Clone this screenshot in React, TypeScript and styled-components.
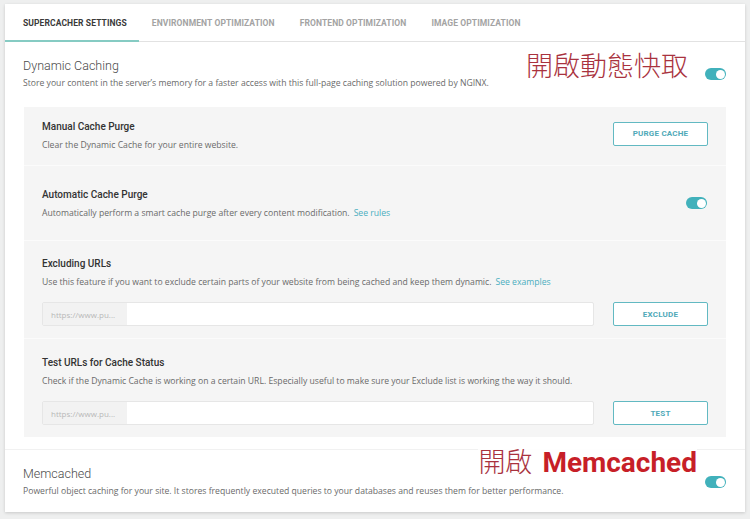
import React from "react";
import styled, { createGlobalStyle } from "styled-components";

const teal = "#41b1bb";

const GlobalStyle = createGlobalStyle`
  html, body {
    margin: 0;
    background: #eeefef;
  }
  * {
    box-sizing: border-box;
  }
`;

const Page = styled.div`
  padding: 4px 5px 7px;
`;

const Card = styled.div`
  background: #fff;
  box-shadow: 0 1px 3px rgba(0, 0, 0, 0.16);
`;

const Tabs = styled.nav`
  display: flex;
  height: 38px;
  border-bottom: 1px solid #e2e2e2;
`;

const Tab = styled.div<{ $active?: boolean }>`
  display: flex;
  align-items: center;
  padding: 2px 12.5px 0;
  font-family: Roboto, "Liberation Sans", sans-serif;
  font-size: 8.5px;
  font-weight: 700;
  letter-spacing: 0.1px;
  text-transform: uppercase;
  color: ${(p) => (p.$active ? "#3a3a3a" : "#a3a3a3")};
  border-bottom: 2px solid ${(p) => (p.$active ? "#86cbc3" : "transparent")};
  margin-bottom: -1px;

  &:first-child {
    padding-left: 18px;
  }
`;

const Section = styled.section<{ $divider?: boolean }>`
  position: relative;
  display: flex;
  align-items: center;
  justify-content: space-between;
  padding: 16px 19px 17px 18px;
  ${(p) =>
    p.$divider &&
    `
    margin-top: 12px;
    border-top: 1px solid #f1f1f1;
    padding-bottom: 14px;
  `}
`;

const SectionTitle = styled.h2`
  margin: 0;
  font-family: Roboto, "Liberation Sans", sans-serif;
  font-size: 12.5px;
  font-weight: 300;
  line-height: 16px;
  color: #4a4a4a;
`;

const Desc = styled.p`
  margin: 2px 0 0;
  font-family: "Open Sans", "Liberation Sans", sans-serif;
  font-size: 8.65px;
  line-height: 14px;
  color: #6a6a6a;
`;

const Link = styled.a`
  margin-left: 4px;
  color: #4aaebf;
  text-decoration: none;
`;

const Toggle = styled.span`
  position: relative;
  display: inline-block;
  flex: none;
  width: 21px;
  height: 12px;
  border-radius: 6px;
  background: ${teal};

  &::after {
    content: "";
    position: absolute;
    top: 1.5px;
    right: 1.5px;
    width: 9px;
    height: 9px;
    border-radius: 50%;
    background: #fff;
  }
`;

const Note = styled.div<{ $top: number; $right: number }>`
  position: absolute;
  top: ${(p) => p.$top}px;
  right: ${(p) => p.$right}px;
  display: flex;
  align-items: baseline;
  gap: 10px;
  color: #a9323e;
  font-family: "Noto Sans CJK TC", "Noto Sans CJK SC", serif;
  font-size: 27px;
  font-weight: 300;
  line-height: 28px;
  white-space: nowrap;
  background: rgba(255, 255, 255, 0.9);
`;

const NoteBold = styled.span`
  color: #c71f28;
  font-family: Roboto, "Liberation Sans", sans-serif;
  font-size: 28px;
  font-weight: 700;
`;

const Panel = styled.div`
  margin: 0 19px;
  background: #f5f5f5;
`;

const Row = styled.div<{ $pad: string }>`
  display: flex;
  align-items: center;
  justify-content: space-between;
  padding: ${(p) => p.$pad};
  & + & {
    border-top: 1px solid #fbfbfb;
  }
`;

const RowBody = styled.div`
  flex: 1;
`;

const RowTitle = styled.h3`
  margin: 0;
  font-family: Roboto, "Liberation Sans", sans-serif;
  font-size: 10px;
  font-weight: 500;
  line-height: 14px;
  color: #333;
`;

const RowDesc = styled(Desc)`
  margin-top: 4px;
`;

const Field = styled.div`
  display: flex;
  align-items: center;
  gap: 19px;
  margin-top: 13px;
`;

const Input = styled.div`
  flex: 1;
  display: flex;
  height: 24px;
  background: #fff;
  border: 1px solid #e6e6e6;
  border-radius: 2px;
`;

const Prefix = styled.span`
  display: flex;
  align-items: center;
  width: 84px;
  padding-left: 8px;
  background: #f2f2f2;
  font-family: "Open Sans", "Liberation Sans", sans-serif;
  font-size: 8px;
  color: #b8b8b8;
`;

const Button = styled.button<{ $lift?: boolean }>`
  flex: none;
  width: 95px;
  height: 24px;
  margin-top: ${(p) => (p.$lift ? "-5px" : "0")};
  background: #fff;
  border: 1.5px solid #62b9c2;
  border-radius: 2px;
  font-family: Roboto, "Liberation Sans", sans-serif;
  font-size: 8px;
  font-weight: 700;
  letter-spacing: 0.2px;
  color: #4fa9b8;
  text-transform: uppercase;
`;

const ToggleSlot = styled.div`
  padding-right: 1px;
`;

const App = () => {
  return (
    <Page>
      <GlobalStyle />
      <Card>
        <Tabs>
          <Tab $active>Supercacher Settings</Tab>
          <Tab>Environment Optimization</Tab>
          <Tab>Frontend Optimization</Tab>
          <Tab>Image Optimization</Tab>
        </Tabs>

        <Section>
          <div>
            <SectionTitle>Dynamic Caching</SectionTitle>
            <Desc>
              Store your content in the server’s memory for a faster access with this full-page caching
              solution powered by NGINX.
            </Desc>
          </div>
          <Note $top={9} $right={57}>開啟動態快取</Note>
          <Toggle />
        </Section>

        <Panel>
          <Row $pad="13px 18px">
            <RowBody>
              <RowTitle>Manual Cache Purge</RowTitle>
              <RowDesc>Clear the Dynamic Cache for your entire website.</RowDesc>
            </RowBody>
            <Button $lift>Purge Cache</Button>
          </Row>

          <Row $pad="22px 18px 20px">
            <RowBody>
              <RowTitle>Automatic Cache Purge</RowTitle>
              <RowDesc>
                Automatically perform a smart cache purge after every content modification.
                <Link>See rules</Link>
              </RowDesc>
            </RowBody>
            <ToggleSlot>
              <Toggle />
            </ToggleSlot>
          </Row>

          <Row $pad="16px 18px 12px">
            <RowBody>
              <RowTitle>Excluding URLs</RowTitle>
              <RowDesc>
                Use this feature if you want to exclude certain parts of your website from being cached
                and keep them dynamic.
                <Link>See examples</Link>
              </RowDesc>
              <Field>
                <Input>
                  <Prefix>https://www.pu...</Prefix>
                </Input>
                <Button>Exclude</Button>
              </Field>
            </RowBody>
          </Row>

          <Row $pad="17px 18px 12px">
            <RowBody>
              <RowTitle>Test URLs for Cache Status</RowTitle>
              <RowDesc>
                Check if the Dynamic Cache is working on a certain URL. Especially useful to make sure
                your Exclude list is working the way it should.
              </RowDesc>
              <Field>
                <Input>
                  <Prefix>https://www.pu...</Prefix>
                </Input>
                <Button>Test</Button>
              </Field>
            </RowBody>
          </Row>
        </Panel>

        <Section $divider>
          <div>
            <SectionTitle>Memcached</SectionTitle>
            <Desc>
              Powerful object caching for your site. It stores frequently executed queries to your
              databases and reuses them for better performance.
            </Desc>
          </div>
          <Note $top={-3} $right={48}>
            開啟<NoteBold>Memcached</NoteBold>
          </Note>
          <Toggle />
        </Section>
      </Card>
    </Page>
  );
};

export default App;
